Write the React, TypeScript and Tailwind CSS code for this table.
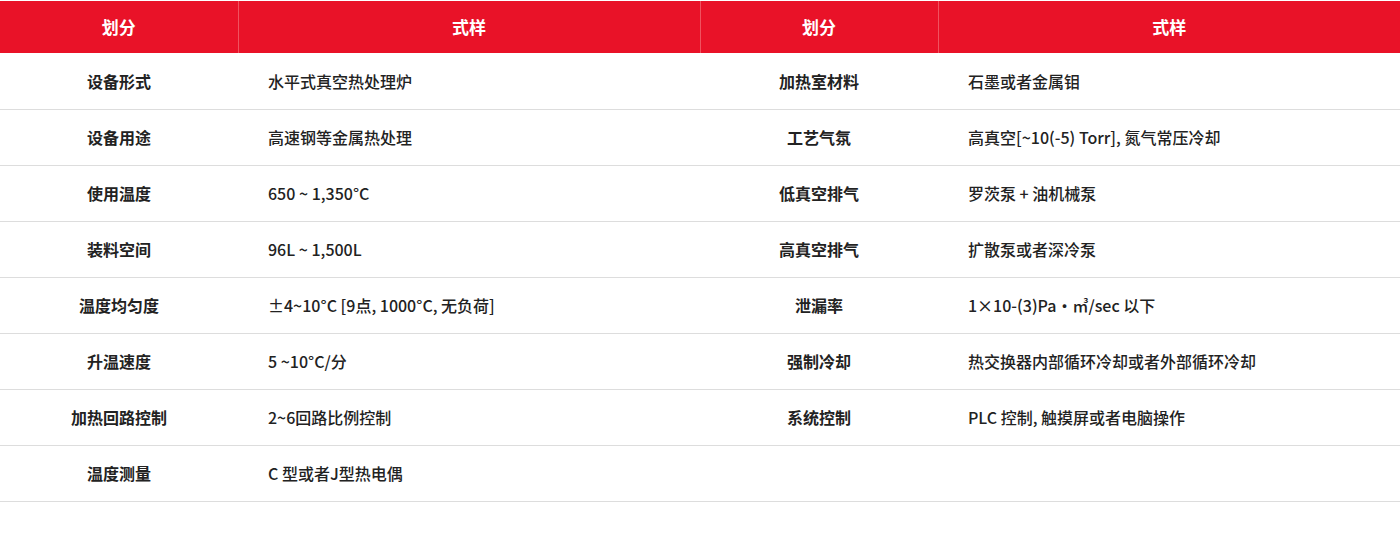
const rows: [string, string, string, string][] = [
  ["设备形式", "水平式真空热处理炉", "加热室材料", "石墨或者金属钼"],
  ["设备用途", "高速钢等金属热处理", "工艺气氛", "高真空[~10(-5) Torr], 氮气常压冷却"],
  ["使用温度", "650 ~ 1,350°C", "低真空排气", "罗茨泵 + 油机械泵"],
  ["装料空间", "96L ~ 1,500L", "高真空排气", "扩散泵或者深冷泵"],
  ["温度均匀度", "±4~10°C [9点, 1000°C, 无负荷]", "泄漏率", "1×10-(3)Pa・㎥/sec 以下"],
  ["升温速度", "5 ~10°C/分", "强制冷却", "热交换器内部循环冷却或者外部循环冷却"],
  ["加热回路控制", "2~6回路比例控制", "系统控制", "PLC 控制, 触摸屏或者电脑操作"],
  ["温度测量", "C 型或者J型热电偶", "", ""],
];

const App = () => {
  return (
    <div
      className="w-[1400px] h-[550px] bg-white pt-px"
      style={{ fontFamily: '"Noto Sans CJK SC", "Noto Sans", sans-serif' }}
    >
      <table className="w-full table-fixed border-collapse">
        <colgroup>
          <col className="w-[238px]" />
          <col className="w-[462px]" />
          <col className="w-[238px]" />
          <col className="w-[462px]" />
        </colgroup>
        <thead>
          <tr className="bg-[#e91228] text-white h-[52px]">
            <th className="text-[17px] font-bold text-center border-r border-[#f0525f]">划分</th>
            <th className="text-[17px] font-bold text-center border-r border-[#f0525f]">式样</th>
            <th className="text-[17px] font-bold text-center border-r border-[#f0525f]">划分</th>
            <th className="text-[17px] font-bold text-center">式样</th>
          </tr>
        </thead>
        <tbody>
          {rows.map((r, i) => (
            <tr key={i} className="h-[56px] border-b border-[#dddddd] text-[#222222]">
              <td className="text-center text-[16px] font-bold">{r[0]}</td>
              <td className="pl-[30px] text-[16px] font-medium">{r[1]}</td>
              <td className="text-center text-[16px] font-bold">{r[2]}</td>
              <td className="pl-[30px] text-[16px] font-medium">{r[3]}</td>
            </tr>
          ))}
        </tbody>
      </table>
    </div>
  );
};

export default App;
